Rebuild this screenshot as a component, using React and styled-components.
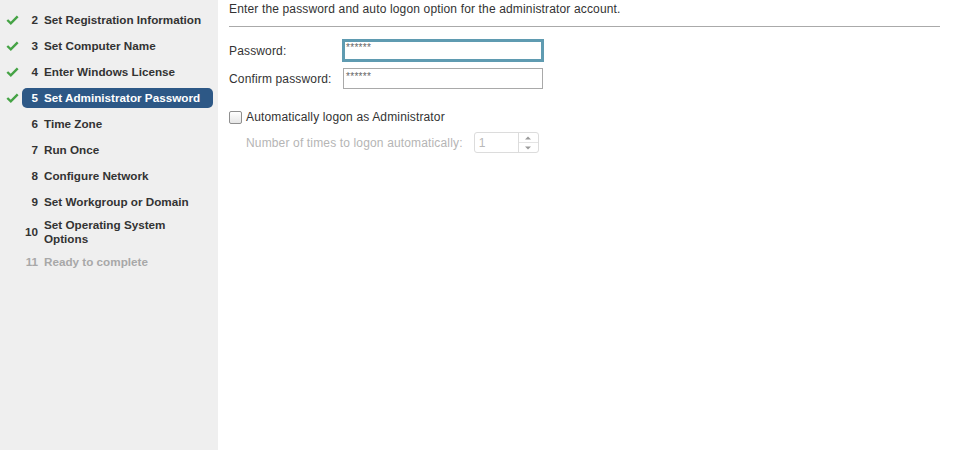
import React from 'react';
import styled, {createGlobalStyle} from 'styled-components';

const Global = createGlobalStyle`
  html, body { margin: 0; padding: 0; background: #fff; }
  body { font-family: "Liberation Sans", Arial, sans-serif; }
`;

const Page = styled.div`
  display: flex;
  width: 956px;
  height: 450px;
  overflow: hidden;
`;

const Sidebar = styled.nav`
  width: 218px;
  flex: none;
  background: #efefef;
  overflow: hidden;
`;

const StepList = styled.ol`
  list-style: none;
  margin: -16px 0 0;
  padding: 0;
  display: flex;
  flex-direction: column;
  gap: 6px;
`;

const Step = styled.li`
  display: flex;
  align-items: center;
  padding-left: 6px;
`;

const Check = styled.span`
  width: 16px;
  flex: none;
  display: flex;
  align-items: center;
`;

const StepBody = styled.div`
  display: flex;
  align-items: center;
  width: 191px;
  min-height: 20px;
  box-sizing: border-box;
  border-radius: 5px;
  font-size: 11.7px;
  font-weight: bold;
  line-height: 14px;
  background: ${p => (p.$active ? '#2d5886' : 'transparent')};
  color: ${p => (p.$active ? '#fff' : p.$muted ? '#a8a8a8' : '#333')};
`;

const StepNum = styled.span`
  width: 16px;
  flex: none;
  text-align: right;
`;

const StepText = styled.span`
  margin-left: 6px;
  width: 164px;
`;

const Main = styled.main`
  flex: 1;
  padding: 2px 16px 0 11px;
  font-size: 12px;
  letter-spacing: 0.15px;
  color: #333;
`;

const Intro = styled.p`
  margin: 0;
  line-height: 14px;
  padding-bottom: 10px;
  border-bottom: 1px solid #aaa;
`;

const Form = styled.div`
  display: grid;
  grid-template-columns: 114px 200px;
  row-gap: 7px;
  align-items: center;
  margin-top: 13px;
`;

const Label = styled.label`
  line-height: 14px;
`;

const Field = styled.div`
  box-sizing: border-box;
  width: ${p => (p.$focus ? '202px' : '200px')};
  height: ${p => (p.$focus ? '23px' : '21px')};
  margin: ${p => (p.$focus ? '-1px' : '0')};
  border: ${p => (p.$focus ? '3px solid #5f9bb1' : '1px solid #a9a9a9')};
  background: #fff;
  font-size: 10px;
  color: #666;
  padding: ${p => (p.$focus ? '0 0 0 1px' : '2px 0 0 2px')};
  line-height: 12px;
  letter-spacing: 0.3px;
`;

const CheckRow = styled.div`
  display: flex;
  align-items: center;
  gap: 4px;
  margin-top: 21px;
  line-height: 14px;
`;

const Box = styled.span`
  width: 11px;
  height: 11px;
  border: 1px solid #8f8f8f;
  border-radius: 2px;
  background: linear-gradient(#fff, #e6e6e6);
`;

const SubRow = styled.div`
  display: flex;
  align-items: center;
  margin: 8px 0 0 17px;
  color: #b5b5b5;
  line-height: 14px;
`;

const Spinner = styled.div`
  display: flex;
  width: 65px;
  height: 21px;
  margin-left: 11px;
  border: 1px solid #dcdcdc;
  border-radius: 3px;
  box-sizing: border-box;
  background: #fff;
  overflow: hidden;
`;

const SpinValue = styled.span`
  flex: 1;
  padding: 3px 0 0 4px;
  color: #b8b8b8;
`;

const SpinButtons = styled.div`
  width: 19px;
  display: flex;
  flex-direction: column;
  border-left: 1px solid #dcdcdc;
`;

const SpinButton = styled.span`
  height: 9.5px;
  display: flex;
  align-items: center;
  justify-content: center;
  border-top: ${p => (p.$down ? '1px solid #e4e4e4' : 'none')};
`;

const Tick = () => (
  <svg width="13" height="10" viewBox="0 0 13 10">
    <path d="M1.3 5 L4.8 8.3 L11.7 1.4" fill="none" stroke="#45a345" strokeWidth="2.4" />
  </svg>
);

const Arrow = ({down}) => (
  <svg width="6" height="4" viewBox="0 0 6 4">
    <path d={down ? 'M0 0.5 H6 L3 3.5 Z' : 'M0 3.5 H6 L3 0.5 Z'} fill="#9a9a9a" />
  </svg>
);

const steps = [
  {n: 1, label: 'Specify Properties', done: true},
  {n: 2, label: 'Set Registration Information', done: true},
  {n: 3, label: 'Set Computer Name', done: true},
  {n: 4, label: 'Enter Windows License', done: true},
  {n: 5, label: 'Set Administrator Password', done: true, active: true},
  {n: 6, label: 'Time Zone'},
  {n: 7, label: 'Run Once'},
  {n: 8, label: 'Configure Network'},
  {n: 9, label: 'Set Workgroup or Domain'},
  {n: 10, label: 'Set Operating System Options'},
  {n: 11, label: 'Ready to complete', muted: true},
];

export default function App() {
  return (
    <>
      <Global />
      <Page>
        <Sidebar>
          <StepList>
            {steps.map(s => (
              <Step key={s.n}>
                <Check>{s.done && <Tick />}</Check>
                <StepBody $active={s.active} $muted={s.muted}>
                  <StepNum>{s.n}</StepNum>
                  <StepText>{s.label}</StepText>
                </StepBody>
              </Step>
            ))}
          </StepList>
        </Sidebar>
        <Main>
          <Intro>Enter the password and auto logon option for the administrator account.</Intro>
          <Form>
            <Label>Password:</Label>
            <Field $focus>******</Field>
            <Label>Confirm password:</Label>
            <Field>******</Field>
          </Form>
          <CheckRow>
            <Box />
            <span>Automatically logon as Administrator</span>
          </CheckRow>
          <SubRow>
            <span>Number of times to logon automatically:</span>
            <Spinner>
              <SpinValue>1</SpinValue>
              <SpinButtons>
                <SpinButton><Arrow /></SpinButton>
                <SpinButton $down><Arrow down /></SpinButton>
              </SpinButtons>
            </Spinner>
          </SubRow>
        </Main>
      </Page>
    </>
  );
}
